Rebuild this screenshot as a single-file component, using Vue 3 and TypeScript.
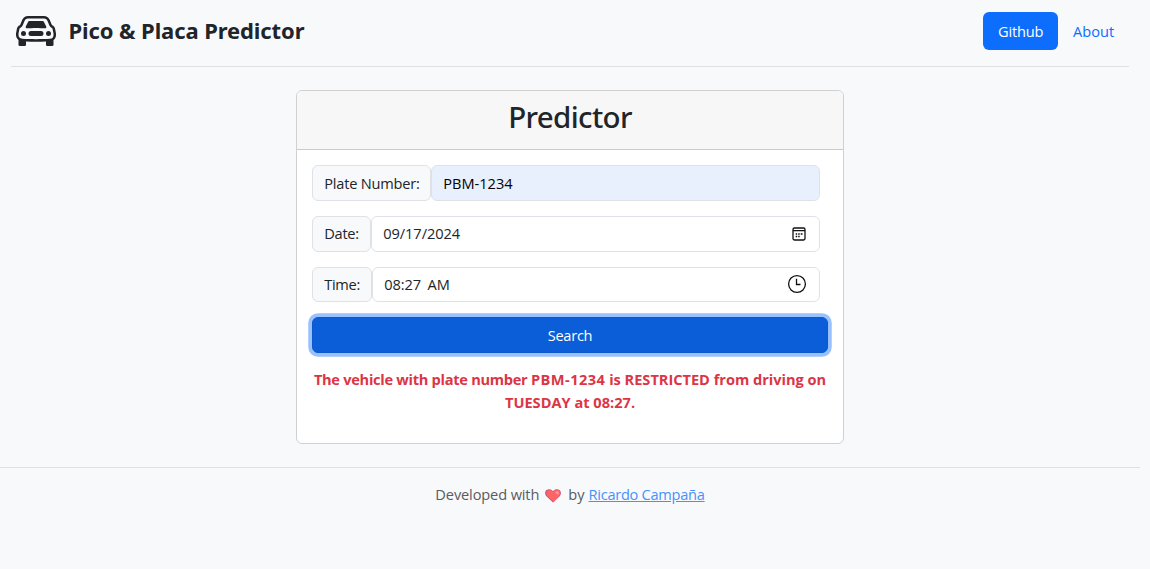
<script setup lang="ts">
import { ref } from 'vue'

const plate = ref('PBM-1234')
const date = ref('09/17/2024')
const hour = ref('08:27')
const day = ref('TUESDAY')
</script>

<template>
  <div class="page">
    <header class="header">
      <a class="brand">
        <svg class="car" viewBox="0 0 16 16" fill="currentColor">
          <path d="M4 9a1 1 0 1 1-2 0 1 1 0 0 1 2 0m10 0a1 1 0 1 1-2 0 1 1 0 0 1 2 0M6 8a1 1 0 0 0 0 2h4a1 1 0 1 0 0-2zM4.862 4.276 3.906 6.19a.51.51 0 0 0 .497.731c.91-.073 2.35-.17 3.597-.17s2.688.097 3.597.17a.51.51 0 0 0 .497-.731l-.956-1.913A.5.5 0 0 0 10.691 4H5.309a.5.5 0 0 0-.447.276" />
          <path fill-rule="evenodd" d="M2.52 3.515A2.5 2.5 0 0 1 4.82 2h6.362c1 0 1.904.596 2.298 1.515l.792 1.848c.075.175.21.319.38.404.5.25.855.715.965 1.262l.335 1.679q.05.242.049.49v.413c0 .814-.39 1.543-1 1.997V13.5a.5.5 0 0 1-.5.5h-2a.5.5 0 0 1-.5-.5v-1.338c-1.292.048-2.745.088-4 .088s-2.708-.04-4-.088V13.5a.5.5 0 0 1-.5.5h-2a.5.5 0 0 1-.5-.5v-1.892c-.61-.454-1-1.183-1-1.997v-.413a2.5 2.5 0 0 1 .049-.49l.335-1.68c.11-.546.465-1.012.964-1.261a.8.8 0 0 0 .381-.404zM4.82 3a1.5 1.5 0 0 0-1.379.91l-.792 1.847a1.8 1.8 0 0 1-.853.904.8.8 0 0 0-.43.564L1.03 8.904a1.5 1.5 0 0 0-.03.294v.413c0 .796.62 1.448 1.408 1.484 1.555.07 3.786.155 5.592.155s4.037-.084 5.592-.155A1.48 1.48 0 0 0 15 9.611v-.413q0-.148-.03-.294l-.335-1.68a.8.8 0 0 0-.43-.563 1.8 1.8 0 0 1-.853-.904l-.792-1.848A1.5 1.5 0 0 0 11.18 3z" />
        </svg>
        <span class="brand-name">Pico &amp; Placa Predictor</span>
      </a>
      <nav class="nav">
        <a class="nav-link active">Github</a>
        <a class="nav-link about">About</a>
      </nav>
    </header>

    <main class="card">
      <div class="card-header"><h2>Predictor</h2></div>
      <form class="card-body" @submit.prevent>
        <div class="group">
          <label class="tag tag-plate">Plate Number:</label>
          <div class="field filled"><span>{{ plate }}</span></div>
        </div>
        <div class="group">
          <label class="tag tag-date">Date:</label>
          <div class="field">
            <span class="date">{{ date }}</span>
            <svg class="calendar" viewBox="0 0 14 14" fill="none" stroke="#111">
              <rect x="1" y="1" width="12" height="12" rx="1.4" stroke-width="1.3" />
              <path d="M1 3.700h12" stroke-width="1.2" />
              <path d="M3.700 7h1.500M6.200 7h1.500M8.700 7h1.800M3.700 9.600h1.500M6.200 9.600h1.500" stroke-width="1.500" />
            </svg>
          </div>
        </div>
        <div class="group group-time">
          <label class="tag tag-time">Time:</label>
          <div class="field">
            <span class="clock-text"><span class="hour">{{ hour }}</span><span>AM</span></span>
            <svg class="clock" viewBox="0 0 20 20" fill="none" stroke="#111" stroke-width="1.3">
              <circle cx="10" cy="10" r="8.4" />
              <path d="M9.5 4.8v5.700h4" />
            </svg>
          </div>
        </div>
        <button class="search" type="submit">Search</button>
        <p class="result">
          <span class="lead">The vehicle with plate number </span>
          <span class="plate">{{ plate }}</span>
          <span class="verdict"> is RESTRICTED from driving on</span><br />
          <span>{{ day }} at {{ hour }}.</span>
        </p>
      </form>
    </main>

    <footer class="footer">
      <span class="made">Developed with</span>
      <svg class="heart" viewBox="0 0 16 14">
        <path d="M8 13.6 1.4 7.3C-.5 5.200-.1 2.200 1.700 1 3.700-.3 6.400.1 8 2.300 9.600.1 12.300-.3 14.300 1c1.800 1.200 2.200 4.200.3 6.300z" fill="#a8205c" />
        <path d="M8.400 13.300 2.200 7C.7 5.200.9 2.800 2.500 1.600 4.300.5 6.700.9 8.200 3 9.700.5 12.200 0 14 1.200c1.700 1.200 1.900 3.900.3 5.800z" fill="#ff3b3f" />
        <path d="M10.200 3.600c.9-1.300 2.200-1.600 3-.9s.7 1.900-.1 3z" fill="#ff8476" />
      </svg>
      <span>by</span>
      <a class="author">Ricardo Campaña</a>
    </footer>
  </div>
</template>

<style>
body {
  background: #f8f9fb;
}
</style>

<style scoped>
* {
  box-sizing: border-box;
}

.page {
  width: 1140px;
  min-height: 569px;
  color: #212529;
  font-family: "Open Sans", "Noto Sans", sans-serif;
  font-size: 14.6px;
  line-height: 22.5px;
}

.header {
  display: flex;
  align-items: center;
  justify-content: space-between;
  height: 67px;
  margin: 0 11px;
  padding: 0 0 4px 5px;
  border-bottom: 1px solid #dee0e2;
}

.brand {
  display: flex;
  align-items: center;
  gap: 12.5px;
}

.car {
  width: 40px;
  height: 40px;
}

.brand-name {
  margin-bottom: 2px;
  font-family: "Noto Sans", sans-serif;
  font-size: 22px;
  font-weight: 700;
  letter-spacing: -0.1px;
  line-height: 30px;
}

.nav {
  display: flex;
}

.nav-link {
  height: 38px;
  padding: 8px 15px;
  border-radius: 6px;
  color: #0d6efd;
}

.nav-link.active {
  width: 75px;
  background: #0d6efd;
  color: #fff;
  letter-spacing: -0.2px;
}

.about {
  width: 71px;
}

.card {
  width: 548px;
  height: 354px;
  margin: 23px auto 0;
  border: 1px solid #ced0d2;
  border-radius: 6px;
  background: #fff;
  overflow: hidden;
}

.card-header {
  height: 59px;
  padding-top: 7px;
  border-bottom: 1px solid #c9cacb;
  background: #f7f7f7;
  text-align: center;
}

h2 {
  margin: 0;
  font-family: "Noto Sans", sans-serif;
  font-size: 29.5px;
  font-weight: 540;
  letter-spacing: -0.65px;
  line-height: 37px;
}

.card-body {
  padding: 15px;
}

.group {
  display: flex;
  width: 508px;
  height: 36px;
  margin-bottom: 15px;
}

.group-time {
  height: 35px;
}

.tag,
.field {
  display: flex;
  align-items: center;
  border: 1px solid #dee2e6;
  border-radius: 6px;
}

.tag {
  flex: none;
  padding-left: 11.25px;
  background: #f8f9fb;
  white-space: nowrap;
}

.tag-plate {
  width: 119px;
  letter-spacing: -0.21px;
}

.tag-date {
  width: 59px;
  padding-bottom: 2px;
  letter-spacing: -0.28px;
}

.tag-time {
  width: 60px;
  letter-spacing: -0.3px;
}

.field {
  flex: 1;
  justify-content: space-between;
  padding: 0 14px 0 11.25px;
  background: #fff;
}

.tag-date + .field {
  padding-right: 14px;
  padding-bottom: 2px;
}

.field.filled {
  background: #e8f0fe;
  color: #000;
}

.date {
  letter-spacing: -0.07px;
}

.calendar {
  width: 14px;
  height: 14px;
  margin: 1px -0.5px 0 0;
}

.clock-text {
  display: flex;
  gap: 6.5px;
}

.hour {
  letter-spacing: -0.1px;
}

.clock {
  width: 20px;
  height: 20px;
  margin: 0 -2px 2px 0;
}

.search {
  display: block;
  width: 516px;
  height: 36px;
  padding: 0;
  border: 1px solid #0a58ca;
  border-radius: 6px;
  background: #0b5ed7;
  box-shadow: 0 0 0 3.75px rgba(49, 132, 253, 0.5);
  color: #fff;
  font: inherit;
  letter-spacing: -0.27px;
}

.result {
  margin: 15px 0 0;
  color: #dc3545;
  font-weight: 700;
  text-align: center;
  white-space: nowrap;
}

.lead {
  letter-spacing: -0.28px;
}

.plate {
  letter-spacing: 0.45px;
}

.verdict {
  letter-spacing: -0.02px;
}

.footer {
  display: flex;
  align-items: center;
  justify-content: center;
  height: 54px;
  margin-top: 23px;
  border-top: 1px solid #dee0e2;
  color: #595c5f;
}

.made {
  letter-spacing: -0.13px;
}

.heart {
  width: 16px;
  height: 14px;
  margin: 2px 7px 0 6px;
  opacity: 0.78;
}

.author {
  margin-left: 4px;
  color: #4891fc;
  letter-spacing: -0.27px;
  text-decoration: underline;
}
</style>
